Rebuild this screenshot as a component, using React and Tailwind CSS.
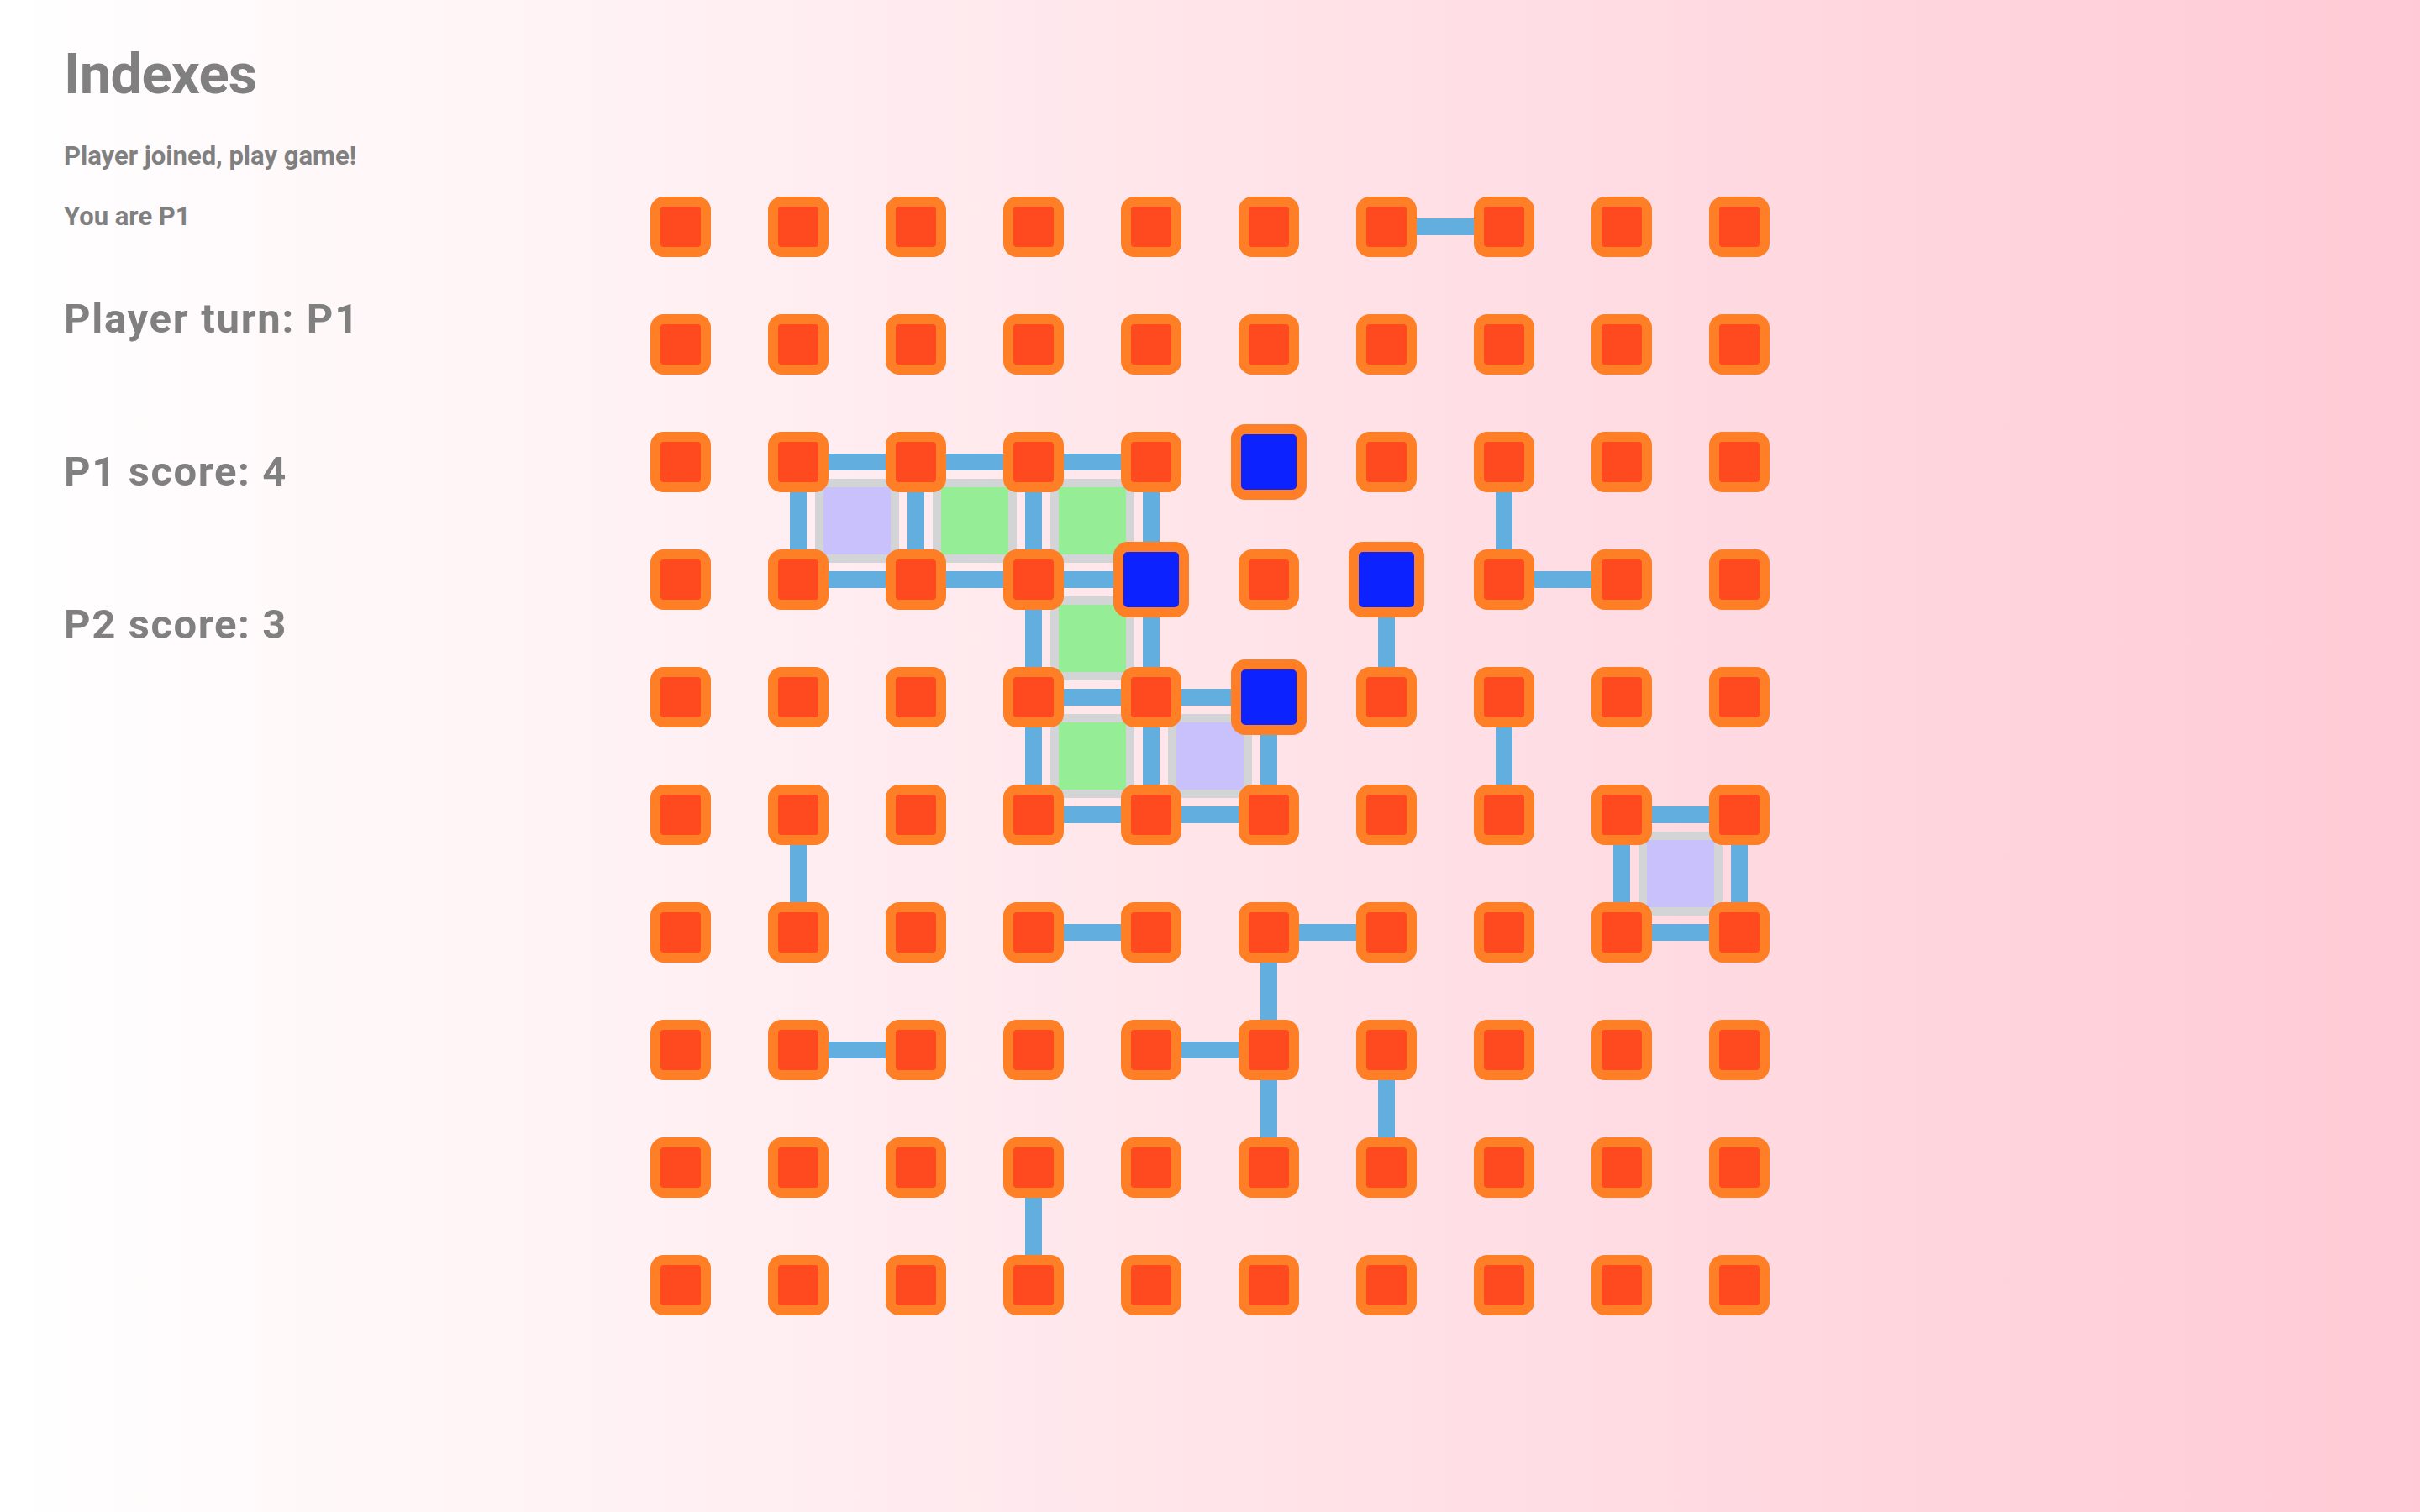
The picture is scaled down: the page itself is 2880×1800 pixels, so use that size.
import React from "react";

const P = 140;
const hEdges = [
  [0, 6],
  [2, 1], [2, 2], [2, 3],
  [3, 1], [3, 2], [3, 3], [3, 7],
  [4, 3], [4, 4],
  [5, 3], [5, 4], [5, 8],
  [6, 3], [6, 5], [6, 8],
  [7, 1], [7, 4],
];
const vEdges = [
  [2, 1], [5, 1],
  [2, 2],
  [2, 3], [3, 3], [4, 3], [8, 3],
  [2, 4], [3, 4], [4, 4],
  [4, 5], [6, 5], [7, 5],
  [3, 6], [7, 6],
  [2, 7], [4, 7],
  [5, 8],
  [5, 9],
];
const boxes = [
  [2, 1, "p"],
  [2, 2, "g"],
  [2, 3, "g"],
  [3, 3, "g"],
  [4, 3, "g"],
  [4, 4, "p"],
  [5, 8, "p"],
];
const blue = new Set(["2-5", "3-4", "3-6", "4-5"]);

function Board() {
  const dots = [];
  for (let r = 0; r < 10; r++) {
    for (let c = 0; c < 10; c++) {
      const isBlue = blue.has(`${r}-${c}`);
      dots.push(
        isBlue ? (
          <div
            key={`d${r}-${c}`}
            className="absolute w-[90px] h-[90px] rounded-[17px] border-[12px] border-[#fe7f25] bg-[#0c22ff]"
            style={{ left: c * P - 9, top: r * P - 9 }}
          />
        ) : (
          <div
            key={`d${r}-${c}`}
            className="absolute w-[72px] h-[72px] rounded-[16px] border-[12px] border-[#fe7f25] bg-[#ff4a1f]"
            style={{ left: c * P, top: r * P }}
          />
        )
      );
    }
  }
  return (
    <div className="relative w-[1332px] h-[1332px]">
      {hEdges.map(([r, c]) => (
        <div
          key={`h${r}-${c}`}
          className="absolute h-[20px] w-[140px] bg-[#62afdf]"
          style={{ left: c * P + 36, top: r * P + 26 }}
        />
      ))}
      {vEdges.map(([r, c]) => (
        <div
          key={`v${r}-${c}`}
          className="absolute w-[20px] h-[140px] bg-[#62afdf]"
          style={{ left: c * P + 26, top: r * P + 36 }}
        />
      ))}
      {boxes.map(([r, c, t]) => (
        <div
          key={`b${r}-${c}`}
          className={
            t === "g"
              ? "absolute w-[100px] h-[100px] border-[10px] border-[#d3d4d6] bg-[#95ee95]"
              : "absolute w-[100px] h-[100px] border-[10px] border-[#d3d4d6] bg-[#c9c1fb]"
          }
          style={{ left: c * P + 56, top: r * P + 56 }}
        />
      ))}
      {dots}
    </div>
  );
}

export default function App() {
  return (
    <div
      className="min-h-screen w-full bg-gradient-to-r from-white to-[#ffcad5] text-[#808080] grid grid-cols-[1fr_auto_1fr]"
      style={{ fontFamily: "Roboto, 'Noto Sans', sans-serif" }}
    >
      <div className="pl-[76px] pt-[48px] flex flex-col">
        <h1 className="text-[67px] leading-[80px] font-bold h-[80px] tracking-[-0.8px] whitespace-nowrap">Indexes</h1>
        <p className="mt-[38px] text-[31px] leading-[40px] font-bold h-[40px] whitespace-nowrap">Player joined, play game!</p>
        <p className="mt-[32px] text-[31px] leading-[40px] font-bold h-[40px] whitespace-nowrap">You are P1</p>
        <h2 className="mt-[72px] text-[49px] leading-[60px] font-bold h-[60px] tracking-[1.7px] whitespace-nowrap">Player turn: P1</h2>
        <h2 className="mt-[122px] text-[49px] leading-[60px] font-bold h-[60px] tracking-[1.6px] whitespace-nowrap">P1 score: 4</h2>
        <h2 className="mt-[122px] text-[49px] leading-[60px] font-bold h-[60px] tracking-[1.6px] whitespace-nowrap">P2 score: 3</h2>
      </div>
      <div className="pt-[234px]">
        <Board />
      </div>
      <div />
    </div>
  );
}
